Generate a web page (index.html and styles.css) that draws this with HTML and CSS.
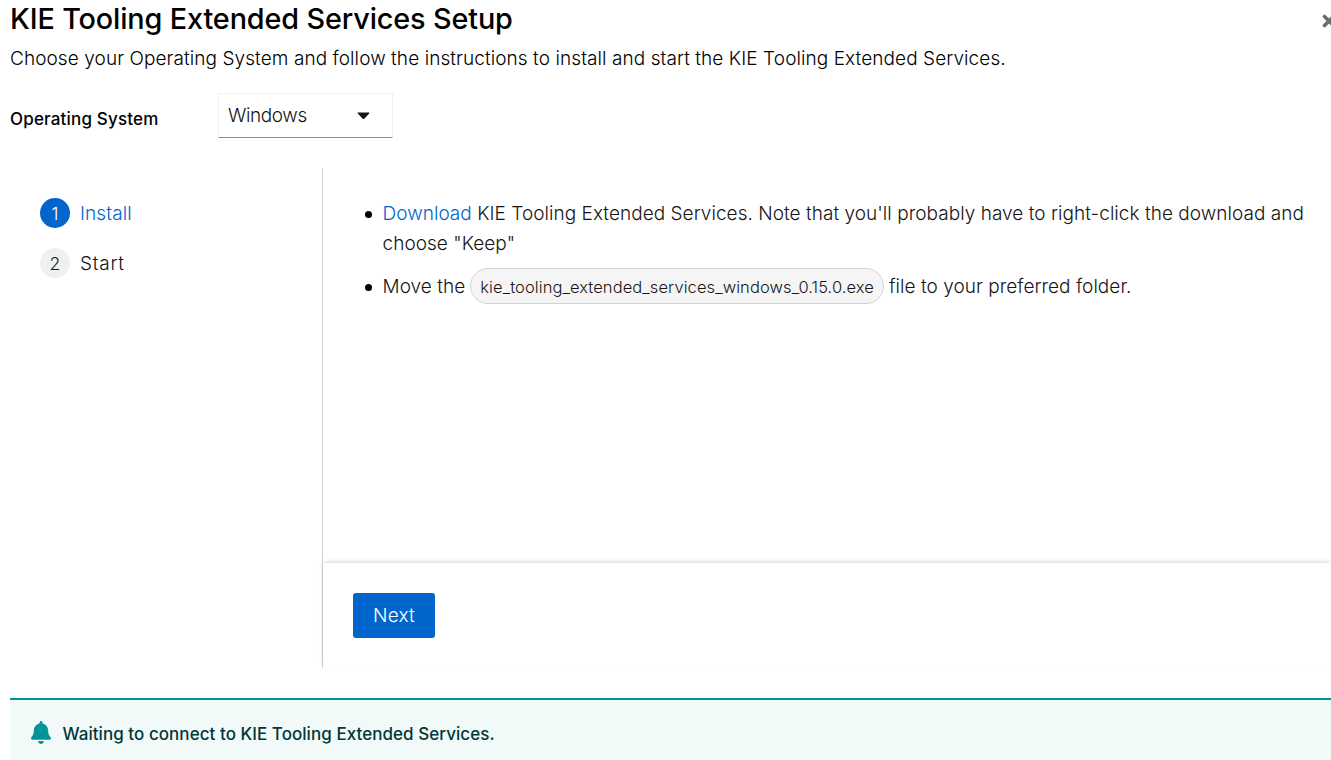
FILE: index.html
```
<!DOCTYPE html>
<html lang="en">
<head>
<meta charset="utf-8">
<title>KIE Tooling Extended Services Setup</title>
<link rel="stylesheet" href="styles.css">
</head>
<body>
<main class="modal">
  <header class="header">
    <div>
      <h1 class="title">KIE Tooling Extended Services Setup</h1>
      <p class="description">Choose your Operating System and follow the instructions to install and start the KIE Tooling Extended Services.</p>
    </div>
    <button class="close" aria-label="Close"><svg width="14" height="20" viewBox="0 0 14 20"><path d="M2.5 5.5 7 10l4.500-4.500M2.500 14.500 7 10l4.500 4.500" fill="none" stroke="#6a6e73" stroke-width="3.600" stroke-linecap="round"/></svg></button>
  </header>
  <div class="form-row">
    <span class="form-label">Operating System</span>
    <button class="select"><span class="select-text">Windows</span><svg width="13" height="8" viewBox="0 0 13 8"><path d="M1.200.5h10.600q1 0 .4.900L7.300 6.700q-.8.8-1.600 0L.8 1.400Q.2.500 1.200.5z" fill="#151515"/></svg></button>
  </div>
  <div class="wizard">
    <nav class="steps">
      <div class="step step-current"><span class="step-number">1</span><span class="step-install">Install</span></div>
      <div class="step"><span class="step-number">2</span><span class="step-start">Start</span></div>
    </nav>
    <section class="panel">
      <ul class="instructions">
        <li><a class="link">Download</a> KIE Tooling Extended Services. Note that you'll probably have to right-click the download and <br>choose "Keep"</li>
        <li class="file-item"><span class="file-text">Move the</span><code class="file">kie_tooling_extended_services_windows_0.15.0.exe</code><span class="file-text">file to your preferred folder.</span></li>
      </ul>
      <footer class="footer"><button class="next">Next</button></footer>
    </section>
  </div>
  <div class="alert">
    <svg class="bell" width="20" height="23" viewBox="0 0 448 512"><path fill="#009596" d="M224 512c35.300 0 64-28.700 64-64H160c0 35.300 28.600 64 64 64zm215.400-149.700c-19.300-20.800-55.500-52-55.500-154.300 0-77.700-54.500-139.900-127.900-155.200V32a32 32 0 1 0-64 0v20.800C118.600 68.100 64.100 130.300 64.100 208c0 102.300-36.200 133.500-55.500 154.300-6 6.400-8.700 14.100-8.600 21.700.1 16.400 13 32 32.100 32h383.800c19.100 0 32-15.600 32.100-32 0-7.600-2.600-15.300-8.600-21.700z"/></svg>
    <span class="alert-title">Waiting to connect to KIE Tooling Extended Services.</span>
  </div>
</main>
</body>
</html>
```
FILE: styles.css
```
* { box-sizing: border-box; }
body { margin: 0; height: 760px; overflow: hidden; background: #fff; color: #151515; font: 350 19px/30px Inter, "Liberation Sans", sans-serif; letter-spacing: 0.08px; }
button { margin: 0; font: inherit; letter-spacing: inherit; color: inherit; }
.modal { padding-left: 10px; }
.header { display: flex; justify-content: space-between; height: 93px; color: #000; }
.title { margin: 0; font-size: 28.8px; line-height: 38px; font-weight: 450; letter-spacing: -0.13px; white-space: nowrap; }
.description { margin: 6px 0 0; white-space: nowrap; }
.close { flex: none; width: 9px; height: 20px; margin-top: 11px; padding: 0; border: 0; background: none; overflow: hidden; }
.close svg { display: block; }
.form-row { display: flex; height: 75px; align-items: flex-start; }
.form-label { width: 208px; padding-top: 11px; color: #000; font-size: 17px; font-weight: 550; letter-spacing: 0.18px; }
.select { display: flex; align-items: center; width: 175px; height: 45px; padding: 0 22px 0 9px; border: 1px solid #f0f0f0; border-bottom-color: #8a8d90; background: #fff; justify-content: space-between; }
.select-text { letter-spacing: -0.4px; }
.wizard { display: flex; height: 500px; }
.steps { display: flex; flex-direction: column; gap: 20px; width: 313px; padding: 30px; border-right: 1px solid #d2d2d2; }
.step { display: flex; gap: 10px; height: 30px; line-height: 32px; }
.step-number { width: 30px; height: 30px; border-radius: 50%; background: #f0f0f0; text-align: center; font-size: 17.5px; line-height: 31px; }
.step-current { color: #06c; }
.step-current .step-number { background: #06c; color: #fff; }
.step-install { letter-spacing: 0.1px; }
.step-start { letter-spacing: 0.75px; }
.panel { display: flex; flex: 1; flex-direction: column; }
.instructions { flex: 1; margin: 0; padding: 31px 10px 0 59.5px; letter-spacing: 0.04px; list-style: none; }
.instructions li::before { content: ""; float: left; width: 7px; height: 7px; margin: 12px 0 0 -18px; border-radius: 50%; background: #000; }
.link { color: #06c; }
.file-item { display: flex; align-items: center; gap: 5px; margin-top: 9px; white-space: nowrap; }
.instructions .file-item::before { margin: 2px 6px 0 -18px; }
.file-text { padding-top: 2px; }
.file { height: 36px; padding: 3px 9px; border: 1px solid #d2d2d2; border-radius: 18px; background: #f5f5f5; font: inherit; font-size: 16.5px; letter-spacing: 0.09px; }
.footer { height: 105px; padding: 30px; background: #fff; box-shadow: 0 -2.5px 5px -1.25px rgba(3, 3, 3, .2); }
.next { width: 82px; height: 45px; padding: 0; border: 0; border-radius: 3px; background: #06c; color: #fff; letter-spacing: 0.2px; }
.alert { display: flex; height: 82px; margin-top: 30px; padding: 21px; border-top: 2px solid #009596; background: #f2f9f9; }
.bell { flex: none; margin-right: 11.5px; }
.alert-title { margin-top: -2px; color: #003737; font-size: 17px; font-weight: 550; letter-spacing: 0.05px; }
```
